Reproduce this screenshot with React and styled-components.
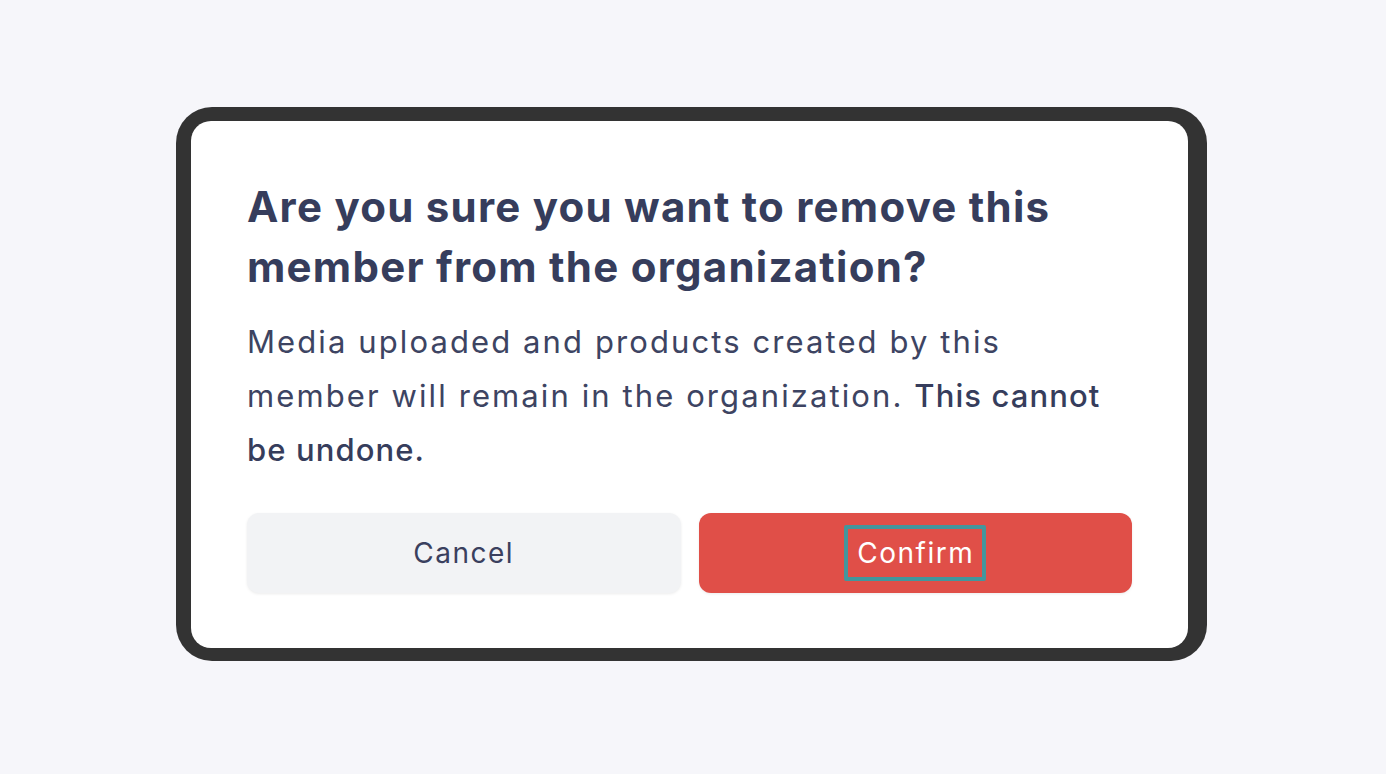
import styled, { createGlobalStyle } from 'styled-components';

const GlobalStyle = createGlobalStyle`
  html, body {
    margin: 0;
    padding: 0;
    background: #f6f6fa;
    font-family: Inter, "Liberation Sans", sans-serif;
  }
`;

export default function App() {
    return (
        <>
            <GlobalStyle />
            <Page>
                <Frame>
                    <Card>
                        <Title>Are you sure you want to remove this member from the organization?</Title>
                        <Body>
                            Media uploaded and products created by this member will remain in the organization.{' '}
                            <Strong>This cannot be undone.</Strong>
                        </Body>
                        <Actions>
                            <Button>Cancel</Button>
                            <DangerButton>
                                <Focus>Confirm</Focus>
                            </DangerButton>
                        </Actions>
                    </Card>
                </Frame>
            </Page>
        </>
    );
}

const Page = styled.div`
    width: 1386px;
    height: 774px;
    display: flex;
    align-items: flex-start;
    justify-content: center;
    padding-top: 107px;
    box-sizing: border-box;
`;

const Frame = styled.div`
    width: 1031px;
    height: 554px;
    box-sizing: border-box;
    background: #333333;
    border-radius: 36px;
    padding: 14px 19px 13px 15px;
    margin-left: -3px;
`;

const Card = styled.div`
    height: 100%;
    box-sizing: border-box;
    background: #fff;
    border-radius: 20px;
    padding: 56px 56px 55px 56px;
    display: flex;
    flex-direction: column;
`;

const Title = styled.h2`
    margin: 0;
    font-size: 42px;
    line-height: 60px;
    font-weight: 700;
    color: #363d5c;
    letter-spacing: 1.25px;
`;

const Body = styled.p`
    margin: 18px 0 0;
    font-size: 31px;
    line-height: 54px;
    font-weight: 400;
    color: #3d4462;
    letter-spacing: 2.1px;
`;

const Strong = styled.span`
    font-weight: 500;
    color: #363d5c;
    letter-spacing: 1.1px;
`;

const Actions = styled.div`
    margin-top: auto;
    display: grid;
    grid-template-columns: 1fr 1fr;
    gap: 18px;
`;

const Button = styled.button`
    height: 80px;
    border: none;
    border-radius: 12px;
    background: #f2f3f5;
    color: #3a405e;
    font-family: inherit;
    font-size: 28px;
    line-height: 34px;
    font-weight: 400;
    letter-spacing: 1.5px;
    box-shadow: 0 1px 3px rgba(0, 0, 0, 0.08);
    display: flex;
    align-items: center;
    justify-content: center;
`;

const DangerButton = styled(Button)`
    background: #e04f48;
    color: #fff;
`;

const Focus = styled.span`
    border: 4px solid #43969c;
    border-radius: 2px;
    padding: 7px 8px 7px 9px;
`;
